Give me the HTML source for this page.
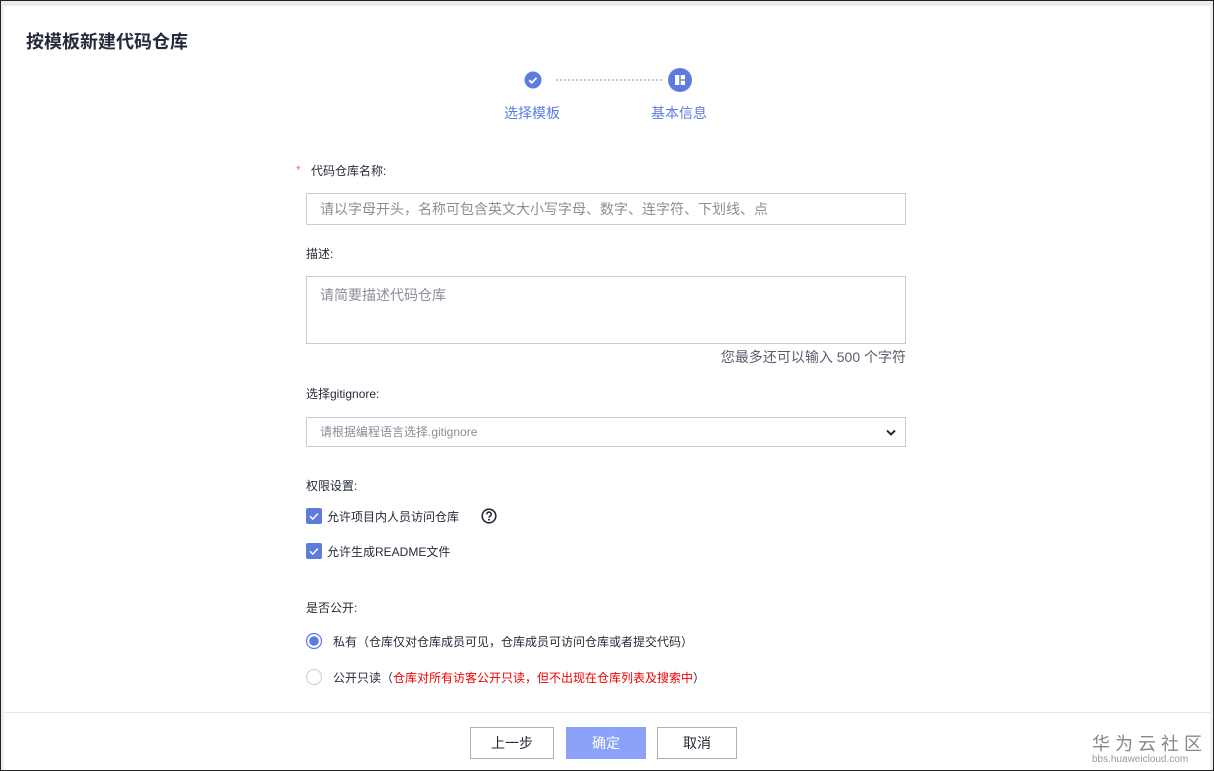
<!DOCTYPE html>
<html><head><meta charset="utf-8"><style>
*{margin:0;padding:0;box-sizing:border-box}
body{width:1214px;height:771px;overflow:hidden;background:#fff;font-family:"Liberation Sans","Noto Sans CJK SC",sans-serif;color:#252b3a;position:relative}
.frame{position:absolute;left:0;top:0;width:1214px;height:771px;border:1px solid #222;}
.topband{position:absolute;left:1px;top:1px;right:1px;height:5px;background:#e8eaee}
.lside{position:absolute;left:1px;top:6px;width:3px;bottom:1px;background:#eef0f3}
.rside{position:absolute;right:1px;top:6px;width:3px;bottom:1px;background:#eef0f3}
.abs{position:absolute}
h1{position:absolute;left:26px;top:28px;font-size:18px;font-weight:bold;color:#252b3a}
.lab{position:absolute;font-size:12px;color:#252b3a}
.inp{position:absolute;left:306px;width:600px;border:1px solid #c9ccd3;background:#fff;font-size:14px;color:#8a8e99;padding-left:13px}
.cb{position:absolute;left:306px;width:16px;height:16px;background:#5e7ce0;border-radius:2px}
.btn{position:absolute;top:727px;height:32px;border:1px solid #adb0b8;font-size:14px;text-align:center;line-height:30px;background:#fff;color:#252b3a}
</style></head><body>
<div class="topband"></div><div class="lside"></div><div class="rside"></div>
<h1>按模板新建代码仓库</h1>
<svg class="abs" style="left:524px;top:71px" width="18" height="18"><circle cx="9" cy="9" r="8.5" fill="#5e7ce0"/><path d="M5.2 9.2l2.6 2.5 4.8-5" stroke="#fff" stroke-width="1.8" fill="none"/></svg>
<div class="abs" style="left:556px;top:79px;width:106px;border-top:2px dotted #c2c6d0"></div>
<svg class="abs" style="left:668px;top:68px" width="24" height="24"><circle cx="12" cy="12" r="12" fill="#5e7ce0"/><rect x="7" y="7" width="4.3" height="10" fill="#fff"/><rect x="12.7" y="7" width="4.3" height="4.3" fill="#fff"/><rect x="12.7" y="12.7" width="4.3" height="4.3" fill="#fff"/></svg>
<div class="abs" style="left:504px;top:103px;font-size:14px;color:#5e7ce0">选择模板</div>
<div class="abs" style="left:651px;top:103px;font-size:14px;color:#5e7ce0">基本信息</div>
<div class="lab" style="left:296px;top:163px;color:#f66f6a">*</div>
<div class="lab" style="left:311px;top:162px">代码仓库名称:</div>
<div class="inp" style="top:193px;height:32px;line-height:30px">请以字母开头，名称可包含英文大小写字母、数字、连字符、下划线、点</div>
<div class="lab" style="left:306px;top:245px">描述:</div>
<div class="inp" style="top:276px;height:68px;padding-top:8px">请简要描述代码仓库</div>
<div class="abs" style="left:700px;top:347px;width:206px;text-align:right;font-size:14px;color:#575d6c">您最多还可以输入 500 个字符</div>
<div class="lab" style="left:306px;top:385px">选择gitignore:</div>
<div class="inp" style="top:417px;height:30px;line-height:28px;font-size:12px">请根据编程语言选择.gitignore</div>
<svg class="abs" style="left:885px;top:428px" width="12" height="10"><path d="M2 2.5l4 4 4-4" stroke="#252b3a" stroke-width="2" fill="none"/></svg>
<div class="lab" style="left:306px;top:477px">权限设置:</div>
<div class="cb" style="top:508px"><svg width="16" height="16"><path d="M4 8.3l2.8 2.8 5-5.5" stroke="#fff" stroke-width="1.5" fill="none"/></svg></div>
<div class="lab" style="left:327px;top:508px">允许项目内人员访问仓库</div>
<svg class="abs" style="left:481px;top:508px" width="16" height="16"><circle cx="8" cy="8" r="6.8" stroke="#252b3a" stroke-width="1.6" fill="none"/><path d="M5.8 6.3a2.2 2.2 0 1 1 3 2c-.6.3-.8.7-.8 1.3" stroke="#252b3a" stroke-width="1.6" fill="none"/><circle cx="8" cy="11.6" r="1" fill="#252b3a"/></svg>
<div class="cb" style="top:543px"><svg width="16" height="16"><path d="M4 8.3l2.8 2.8 5-5.5" stroke="#fff" stroke-width="1.5" fill="none"/></svg></div>
<div class="lab" style="left:327px;top:543px">允许生成README文件</div>
<div class="lab" style="left:306px;top:599px">是否公开:</div>
<svg class="abs" style="left:305px;top:632px" width="18" height="18"><circle cx="9" cy="9" r="7.5" stroke="#5e7ce0" stroke-width="1.2" fill="#fff"/><circle cx="9" cy="9" r="4.8" fill="#5e7ce0"/></svg>
<div class="lab" style="left:333px;top:633px">私有（仓库仅对仓库成员可见，仓库成员可访问仓库或者提交代码）</div>
<svg class="abs" style="left:305px;top:668px" width="18" height="18"><circle cx="9" cy="9" r="7.5" stroke="#d3d5da" stroke-width="1.2" fill="#fff"/></svg>
<div class="lab" style="left:333px;top:669px">公开只读（<span style="color:#e00">仓库对所有访客公开只读，但不出现在仓库列表及搜索中</span>）</div>
<div class="abs" style="left:4px;right:4px;top:712px;border-top:1px solid #e4e6ea"></div>
<div class="btn" style="left:470px;width:84px">上一步</div>
<div class="btn" style="left:566px;width:80px;background:#8aa2f7;border-color:#8aa2f7;color:#fff">确定</div>
<div class="btn" style="left:657px;width:80px">取消</div>
<div class="abs" style="left:1092px;top:730px;font-size:18px;letter-spacing:5px;color:#888">华为云社区</div>
<div class="abs" style="left:1092px;top:754px;font-size:10px;color:#999">bbs.huaweicloud.com</div>
<div class="frame"></div>
</body></html>
